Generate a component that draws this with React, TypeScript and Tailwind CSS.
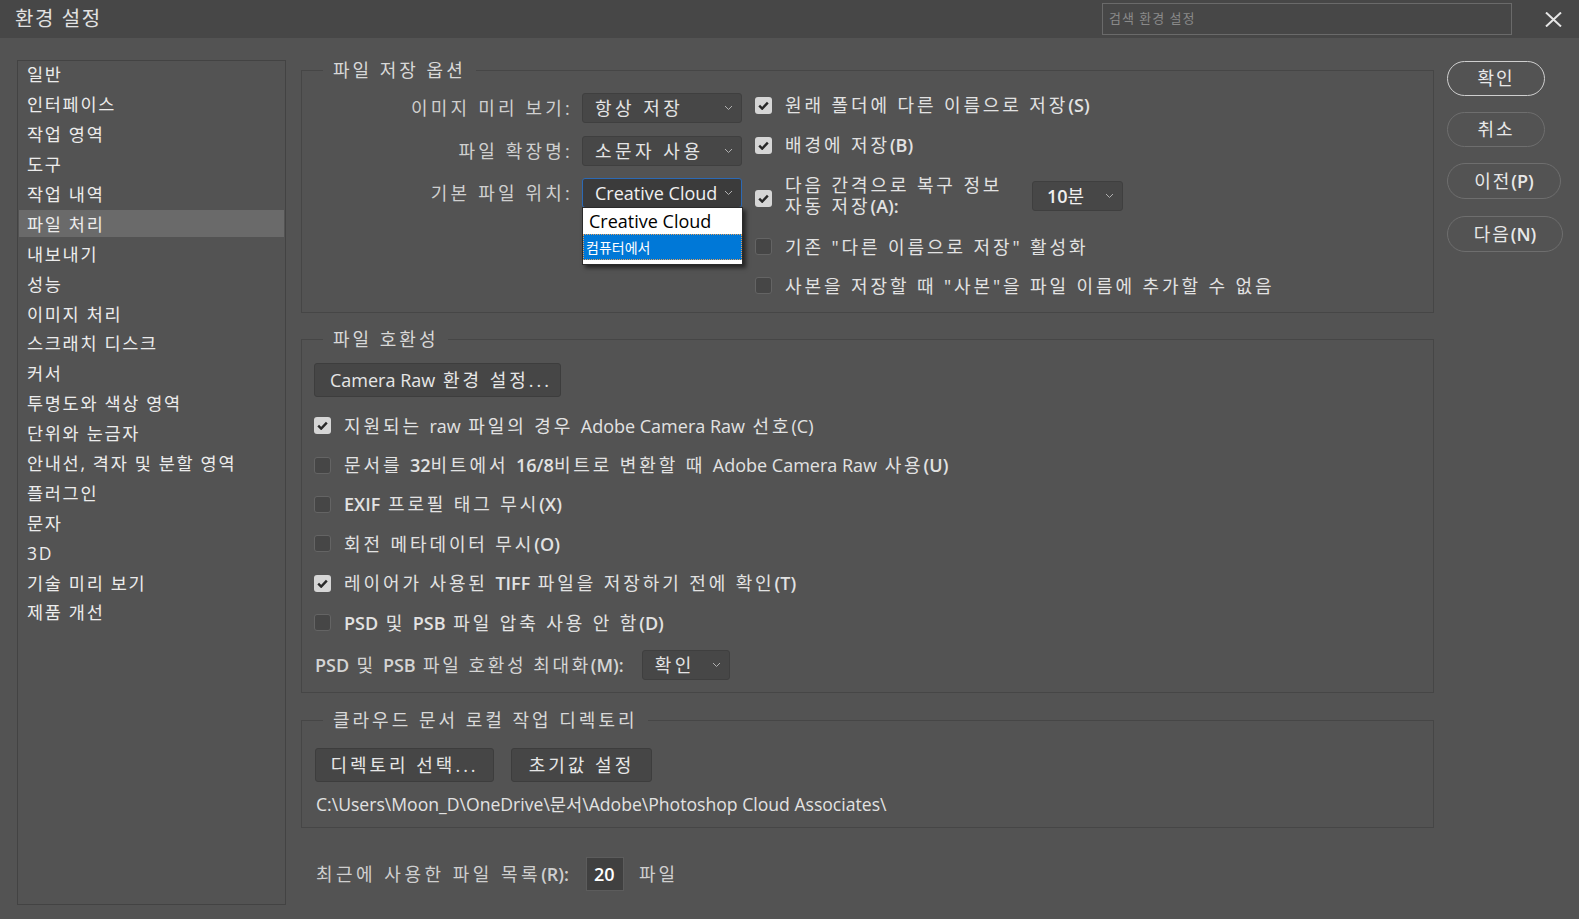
import React from 'react';

const sidebarItems = [
  '일반',
  '인터페이스',
  '작업 영역',
  '도구',
  '작업 내역',
  '파일 처리',
  '내보내기',
  '성능',
  '이미지 처리',
  '스크래치 디스크',
  '커서',
  '투명도와 색상 영역',
  '단위와 눈금자',
  '안내선, 격자 및 분할 영역',
  '플러그인',
  '문자',
  '3D',
  '기술 미리 보기',
  '제품 개선',
];

const Chevron = () => (
  <svg width="9" height="6" viewBox="0 0 9 6" className="shrink-0">
    <path d="M1 1l3.5 3.5L8 1" fill="none" stroke="#b0b0b0" strokeWidth="1" />
  </svg>
);

const Checkbox = ({ checked }: { checked?: boolean }) =>
  checked ? (
    <span className="w-[17px] h-[17px] rounded-[3px] bg-[#d6d6d6] flex items-center justify-center shrink-0">
      <svg width="11" height="9" viewBox="0 0 11 9">
        <path d="M1.2 4.6l3 3L9.8 1.6" fill="none" stroke="#282828" strokeWidth="2.4" />
      </svg>
    </span>
  ) : (
    <span className="w-[17px] h-[17px] rounded-[3px] bg-[#464646] border border-[#646464] shrink-0" />
  );

// bold latin bits (mnemonics, numbers)
const B = ({ children }: { children: React.ReactNode }) => (
  <span className="font-semibold tracking-normal">{children}</span>
);

// regular latin words, no extra spacing
const L = ({ children }: { children: React.ReactNode }) => <span className="tracking-normal">{children}</span>;

const Select = ({ value, width }: { value: React.ReactNode; width: string }) => (
  <div className={`${width} h-[30px] rounded-[3px] bg-[#474747] border border-[#3f3f3f] flex items-center pl-[12px] pr-[8px]`}>
    <span className="flex-1 text-[18px] tracking-[3.5px] text-[#e4e4e4] leading-none whitespace-nowrap">{value}</span>
    <Chevron />
  </div>
);

const Fieldset = ({
  title,
  className,
  children,
}: {
  title: string;
  className: string;
  children: React.ReactNode;
}) => (
  <fieldset className={`border border-[#464646] min-w-0 ${className}`}>
    <legend className="ml-[21px] px-[10px] leading-[26px] text-[18px] tracking-[3px] text-[#d8d8d8]">{title}</legend>
    {children}
  </fieldset>
);

const CheckRow = ({ checked, children, className }: { checked?: boolean; children: React.ReactNode; className: string }) => (
  <div className={`flex items-center gap-[13px] ${className}`}>
    <Checkbox checked={checked} />
    <span className="text-[18px] tracking-[2.9px] text-[#e2e2e2] leading-none whitespace-nowrap">{children}</span>
  </div>
);

const PillButton = ({ children, primary, className }: { children: React.ReactNode; primary?: boolean; className: string }) => (
  <button
    className={`rounded-full border-[1.5px] flex items-center justify-center text-[18px] tracking-[2px] text-[#e8e8e8] ${
      primary ? 'border-[#cfcfcf]' : 'border-[#6e6e6e]'
    } ${className}`}
  >
    {children}
  </button>
);

const FlatButton = ({ children, className }: { children: React.ReactNode; className: string }) => (
  <button
    className={`h-[34px] rounded-[3px] bg-[#464646] border border-[#3d3d3d] text-[18px] tracking-[3px] text-[#e6e6e6] flex items-center whitespace-nowrap ${className}`}
  >
    {children}
  </button>
);

const labelCls = 'text-right text-[18px] tracking-[3.2px] text-[#cfcfcf] leading-none whitespace-nowrap';

export default function App() {
  return (
    <div className="w-[1579px] h-[919px] bg-[#535353] flex flex-col overflow-hidden font-['Open_Sans','Noto_Sans_CJK_KR',sans-serif]">
      <header className="h-[38px] shrink-0 bg-[#474747] flex items-center">
        <span className="pl-[15px] text-[20px] tracking-[1.6px] text-[#e2e2e2]">환경 설정</span>
        <div className="ml-auto w-[410px] h-[32px] border border-[#6a6a6a] flex items-center pl-[6px] text-[13px] tracking-[1px] text-[#8a8a8a]">
          검색 환경 설정
        </div>
        <svg width="17" height="15" viewBox="0 0 17 15" className="ml-[33px] mr-[17px]">
          <path d="M1 0.5L16 14.5M16 0.5L1 14.5" stroke="#e6e6e6" strokeWidth="2" />
        </svg>
      </header>

      <div className="flex flex-1">
        <aside className="ml-[17px] mt-[22px] w-[269px] h-[845px] border border-[#434343]">
          {sidebarItems.map((item) => (
            <div
              key={item}
              className={`h-[27px] mb-[2.9px] mx-px pl-[8px] flex items-center text-[17.5px] tracking-[1.7px] text-[#ececec] whitespace-nowrap ${
                item === '파일 처리' ? 'bg-[#6a6a6a]' : ''
              }`}
            >
              {item}
            </div>
          ))}
        </aside>

        <main className="ml-[15px] mt-[19px] w-[1133px] flex flex-col">
          <Fieldset title="파일 저장 옵션" className="h-[256px]">
            <div className="flex items-start">
              <div className="mt-[10px] grid grid-cols-[271px_160px] gap-x-[9px] gap-y-[12.5px] items-center content-start">
                <span className={labelCls}>이미지 미리 보기:</span>
                <Select value="항상 저장" width="w-[160px]" />
                <span className={labelCls}>파일 확장명:</span>
                <Select value="소문자 사용" width="w-[160px]" />
                <span className={labelCls}>기본 파일 위치:</span>
                <div className="relative">
                  <div className="w-[160px] h-[30px] rounded-[3px] bg-[#3b3b3b] border border-[#2c69b4] flex items-center pl-[12px] pr-[8px]">
                    <span className="flex-1 text-[18px] text-[#f0f0f0] leading-none">Creative Cloud</span>
                    <Chevron />
                  </div>
                  <div className="absolute left-0 top-[29px] w-[161px] bg-white border border-[#2b2b2b] shadow-[3px_3px_4px_rgba(0,0,0,0.55)] pb-[4px] z-10">
                    <div className="h-[26px] pl-[6px] flex items-center text-[18px] text-black">Creative Cloud</div>
                    <div className="h-[26px] pl-[3px] flex items-center text-[14px] text-white bg-[#0078d7] outline-1 outline-dotted outline-[#e0a060] -outline-offset-1">
                      컴퓨터에서
                    </div>
                  </div>
                </div>
              </div>

              <div className="ml-[13px] mt-[2px] flex flex-col">
                <CheckRow checked className="h-[40px]">
                  원래 폴더에 다른 이름으로 저장<B>(S)</B>
                </CheckRow>
                <CheckRow checked className="h-[40px]">
                  배경에 저장<B>(B)</B>
                </CheckRow>
                <div className="h-[66px] flex items-center gap-[13px]">
                  <Checkbox checked />
                  <div className="w-[234px] text-[18px] tracking-[2.9px] text-[#e2e2e2] leading-[21px] mb-[5px] whitespace-nowrap">
                    <div>다음 간격으로 복구 정보</div>
                    <div>
                      자동 저장<B>(A):</B>
                    </div>
                  </div>
                  <div className="w-[91px] h-[30px] rounded-[3px] bg-[#474747] border border-[#3f3f3f] flex items-center pl-[14px] pr-[8px] mb-[4px]">
                    <span className="flex-1 text-[18px] text-[#f0f0f0] leading-none">
                      <B>10</B>분
                    </span>
                    <Chevron />
                  </div>
                </div>
                <CheckRow className="h-[31px]">기존 "다른 이름으로 저장" 활성화</CheckRow>
                <CheckRow className="h-[47px]">사본을 저장할 때 "사본"을 파일 이름에 추가할 수 없음</CheckRow>
              </div>
            </div>
          </Fieldset>

          <Fieldset title="파일 호환성" className="mt-[13px] h-[367px]">
            <div className="pl-[12px] pt-[11px] flex flex-col">
              <FlatButton className="w-[247px] pl-[15px]">
                <L>Camera Raw</L>&nbsp;환경 설정...
              </FlatButton>
              <div className="mt-[9px] flex flex-col">
                <CheckRow checked className="h-[39.4px]">
                  지원되는 <L>raw</L> 파일의 경우 <L>Adobe Camera Raw</L> 선호<L>(C)</L>
                </CheckRow>
                <CheckRow className="h-[39.4px]">
                  문서를 <B>32</B>비트에서 <B>16/8</B>비트로 변환할 때 <L>Adobe Camera Raw</L> 사용<B>(U)</B>
                </CheckRow>
                <CheckRow className="h-[39.4px]">
                  <B>EXIF</B> 프로필 태그 무시<B>(X)</B>
                </CheckRow>
                <CheckRow className="h-[39.4px]">
                  회전 메타데이터 무시<B>(O)</B>
                </CheckRow>
                <CheckRow checked className="h-[39.4px]">
                  레이어가 사용된 <B>TIFF</B> 파일을 저장하기 전에 확인<B>(T)</B>
                </CheckRow>
                <CheckRow className="h-[39.4px]">
                  <B>PSD</B> 및 <B>PSB</B> 파일 압축 사용 안 함<B>(D)</B>
                </CheckRow>
              </div>
              <div className="h-[45px] flex items-center gap-[18px] pl-[1px]">
                <span className="text-[18px] tracking-[2.6px] text-[#d4d4d4] leading-none whitespace-nowrap">
                  <B>PSD</B> 및 <B>PSB</B> 파일 호환성 최대화<B>(M):</B>
                </span>
                <Select value="확인" width="w-[88px]" />
              </div>
            </div>
          </Fieldset>

          <Fieldset title="클라우드 문서 로컬 작업 디렉토리" className="mt-[14px] h-[121px]">
            <div className="pl-[13px] pt-[15px] flex flex-col">
              <div className="flex gap-[17px]">
                <FlatButton className="w-[179px] justify-center">디렉토리 선택...</FlatButton>
                <FlatButton className="w-[141px] justify-center">초기값 설정</FlatButton>
              </div>
              <div className="mt-[12px] pl-[1px] text-[17.6px] leading-[20px] text-[#e2e2e2] whitespace-nowrap">
                C:\Users\Moon_D\OneDrive\문서\Adobe\Photoshop Cloud Associates\
              </div>
            </div>
          </Fieldset>

          <div className="mt-[29px] ml-[15px] flex items-center">
            <span className="text-[18px] text-[#cfcfcf] tracking-[3.5px] leading-none whitespace-nowrap">
              최근에 사용한 파일 목록<B>(R):</B>
            </span>
            <div className="ml-[17px] w-[38px] h-[34px] bg-[#404040] border border-[#5c5c5c] flex items-center pl-[7px] text-[18px] text-white">
              <B>20</B>
            </div>
            <span className="ml-[15px] text-[18px] text-[#cfcfcf] tracking-[3px]">파일</span>
          </div>
        </main>

        <div className="ml-[13px] mt-[23px] flex flex-col items-start">
          <PillButton primary className="w-[98px] h-[35px]">
            확인
          </PillButton>
          <PillButton className="mt-[16px] w-[98px] h-[35px]">취소</PillButton>
          <PillButton className="mt-[16px] w-[114px] h-[36px]">
            이전<B>(P)</B>
          </PillButton>
          <PillButton className="mt-[17px] w-[116px] h-[36px]">
            다음<B>(N)</B>
          </PillButton>
        </div>
      </div>
    </div>
  );
}
